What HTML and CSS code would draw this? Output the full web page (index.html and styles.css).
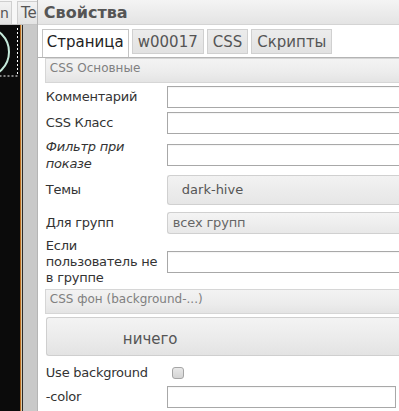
FILE: index.html
```html
<!DOCTYPE html>
<html lang="ru">
<head>
<meta charset="utf-8">
<title>Свойства</title>
<link rel="stylesheet" href="styles.css">
</head>
<body>
<div class="screen">
  <div class="backdrop">
    <div class="bg-tabs">
      <div class="bg-tab bg-tab-a">n</div>
      <div class="bg-tab bg-tab-b">Te</div>
    </div>
    <div class="bg-body">
      <div class="canvas">
        <svg width="20" height="386" viewBox="0 0 20 386">
          <circle cx="-16" cy="27" r="25" fill="none" stroke="#c6eadb" stroke-width="2"/>
          <path d="M17.5 3 V51 H0" fill="none" stroke="#ffffff" stroke-width="1" stroke-dasharray="2 2"/>
        </svg>
      </div>
      <div class="edge"></div>
      <div class="gutter"></div>
    </div>
  </div>
  <div class="dialog">
    <div class="titlebar">Свойства</div>
    <div class="tabs">
      <div class="tab active">Страница</div>
      <div class="tab">w00017</div>
      <div class="tab">CSS</div>
      <div class="tab">Скрипты</div>
    </div>
    <div class="panel">
      <div class="group">CSS Основные</div>
      <div class="row r1">
        <div class="label">Комментарий</div>
        <div class="input"></div>
      </div>
      <div class="row r2">
        <div class="label">CSS Класс</div>
        <div class="input"></div>
      </div>
      <div class="row r3">
        <div class="label italic">Фильтр при показе</div>
        <div class="input"></div>
      </div>
      <div class="row r4">
        <div class="label">Темы</div>
        <div class="select big">dark-hive</div>
      </div>
      <div class="row r5">
        <div class="label">Для групп</div>
        <div class="select small">всех групп</div>
      </div>
      <div class="row r6">
        <div class="label">Если пользователь не в группе</div>
        <div class="input"></div>
      </div>
      <div class="group g2">CSS фон (background-...)</div>
      <div class="button">ничего</div>
      <div class="row r7">
        <div class="label">Use background</div>
        <div class="checkbox"></div>
      </div>
      <div class="row r8">
        <div class="label">-color</div>
        <div class="input short"></div>
      </div>
    </div>
  </div>
</div>
</body>
</html>
```
FILE: styles.css
```css
html, body {
  margin: 0;
  padding: 0;
  overflow: hidden;
  background: #ffffff;
}
.screen {
  display: flex;
  width: 399px;
  height: 411px;
  overflow: hidden;
  font-family: "DejaVu Sans", Verdana, sans-serif;
}
.backdrop {
  flex: 0 0 35px;
  display: flex;
  flex-direction: column;
}
.bg-tabs {
  height: 24px;
  display: flex;
  align-items: flex-end;
  gap: 5px;
  background: #f7f7f7;
  border-bottom: 1px solid #c4c4c4;
}
.bg-tab {
  height: 22px;
  font-size: 15px;
  line-height: 22px;
  color: #555;
  background: linear-gradient(#f2f2f2, #e3e3e3);
  border: 1px solid #cfcfcf;
  border-bottom: none;
  overflow: hidden;
  white-space: nowrap;
}
.bg-tab-a {
  width: 11px;
  font-size: 14px;
  border-left: none;
}
.bg-tab-b {
  flex: 1;
  padding-left: 3px;
  border-right: none;
}
.bg-body {
  flex: 1;
  display: flex;
}
.canvas {
  width: 20px;
  background: #0b0b0b;
}
.canvas svg {
  display: block;
}
.edge {
  width: 2px;
  background: linear-gradient(90deg, #b86a1e 0 50%, #d8c9a8 50% 100%);
  border-right: 1px solid #2a2a2a;
}
.gutter {
  flex: 1;
  background: #c9c9c9;
}
.dialog {
  flex: 0 0 420px;
  background: #ffffff;
  border-left: 1px solid #b5b5b5;
  display: flex;
  flex-direction: column;
}
.titlebar {
  height: 24px;
  padding-left: 6px;
  font-size: 16px;
  font-weight: bold;
  line-height: 25px;
  color: #555555;
  background: linear-gradient(#f4f4f4, #e4e4e4);
  border-bottom: 1px solid #d4d4d4;
}
.tabs {
  display: flex;
  align-items: flex-start;
  gap: 3px;
  padding: 4px 0 0 4px;
  height: 28px;
  border-bottom: 1px solid #b4b4b4;
}
.tab {
  height: 23px;
  padding: 0 5px;
  font-size: 15px;
  line-height: 24px;
  color: #555;
  background: linear-gradient(#ececec, #e2e2e2);
  border: 1px solid #d0d0d0;
}
.tab.active {
  height: 27px;
  padding: 0 4px;
  color: #222;
  background: #ffffff;
  border-color: #c4c4c4;
  border-bottom: none;
}
.panel {
  padding-left: 7px;
  display: flex;
  flex-direction: column;
}
.group {
  height: 23px;
  padding-left: 4px;
  font-size: 12px;
  line-height: 19px;
  color: #808080;
  background: linear-gradient(#f3f3f3 0%, #ececec 60%, #e4e4e4 100%);
  border: 1px solid #d6d6d6;
  border-right: none;
}
.row {
  display: flex;
  align-items: center;
}
.label {
  padding-left: 1px;
  flex: 0 0 122px;
  box-sizing: border-box;
  font-size: 13px;
  letter-spacing: -0.25px;
  line-height: 16px;
  color: #333;
}
.label.italic {
  font-style: italic;
  line-height: 17px;
}
.input {
  flex: 1;
  height: 20px;
  border: 1px solid #a8a8a8;
  border-right: none;
  background: #fff;
  box-shadow: inset 0 1px 1px rgba(0,0,0,0.04);
}
.input.short {
  flex: 0 0 227px;
  border-right: 1px solid #a8a8a8;
}
.select {
  flex: 1;
  border: 1px solid #d0d0d0;
  border-right: none;
  border-radius: 3px 0 0 3px;
  font-size: 13px;
  color: #555;
  box-sizing: border-box;
}
.select.big {
  height: 30px;
  line-height: 28px;
  padding-left: 14px;
  background: linear-gradient(#f2f2f2, #e6e6e6);
}
.select.small {
  height: 22px;
  line-height: 20px;
  padding-left: 5px;
  letter-spacing: -0.2px;
  color: #666;
  background: linear-gradient(#f4f4f4, #e8e8e8);
}
.r1 { margin-top: 3px; height: 22px; }
.r2 { margin-top: 4px; height: 22px; }
.r3 { margin-top: 4px; height: 34px; }
.r4 { margin-top: 3px; height: 30px; }
.r5 { margin-top: 7px; height: 22px; }
.r6 { margin-top: 4px; height: 48px; }
.g2 { margin-top: 3px; }
.button {
  margin-top: 3px;
  margin-left: 1px;
  height: 37px;
  padding-left: 76px;
  font-size: 15px;
  line-height: 43px;
  color: #555;
  background: linear-gradient(#f3f3f3 0%, #ececec 50%, #e3e3e3 100%);
  border: 1px solid #cfcfcf;
  border-right: none;
  border-radius: 3px 0 0 3px;
}
.r7 { margin-top: 4px; height: 26px; }
.checkbox {
  margin-left: 5px;
  width: 10px;
  height: 10px;
  border: 1px solid #a5a5a5;
  border-radius: 3px;
  background: linear-gradient(#e8e8e8, #d4d4d4);
}
.r8 { margin-top: 0; height: 22px; }
```
